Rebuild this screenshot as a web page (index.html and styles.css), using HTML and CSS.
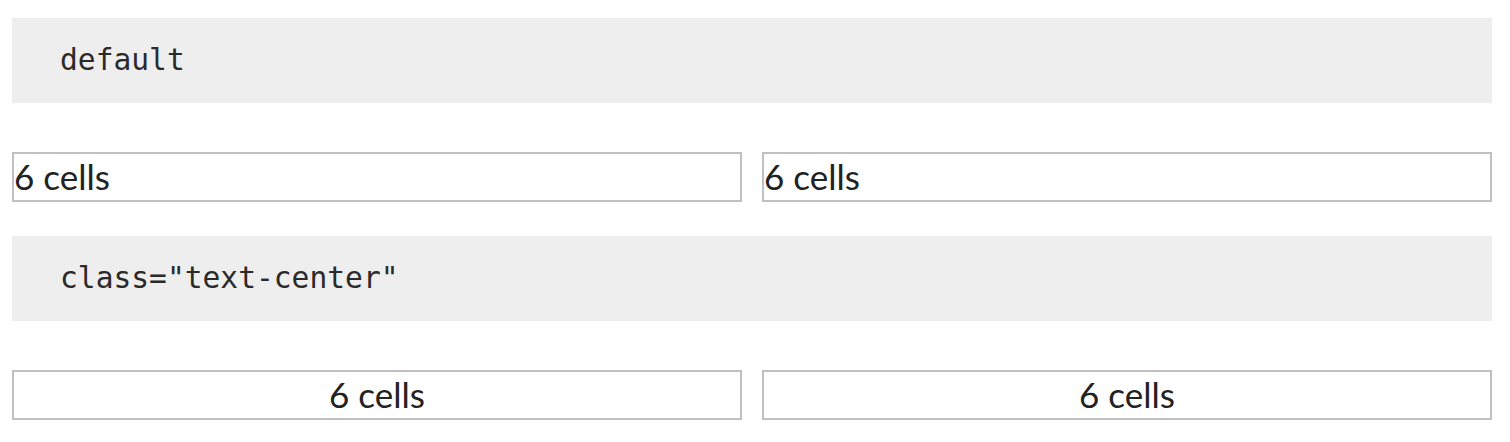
FILE: index.html
```html
<!DOCTYPE html>
<html>
<head>
<meta charset="utf-8">
<link rel="stylesheet" href="styles.css">
</head>
<body>
<div class="page">
  <div class="code"><code>default</code></div>
  <div class="row">
    <div class="cell">6 cells</div>
    <div class="cell">6 cells</div>
  </div>
  <div class="code"><code>class="text-center"</code></div>
  <div class="row text-center">
    <div class="cell">6 cells</div>
    <div class="cell">6 cells</div>
  </div>
</div>
</body>
</html>
```
FILE: styles.css
```css
html, body {
  margin: 0;
  padding: 0;
  background: #ffffff;
}
.page {
  width: 1480px;
  margin-left: 12px;
  padding-top: 18px;
}
.code {
  height: 85px;
  background: #eeeeee;
  padding: 0 48px;
  display: flex;
  align-items: center;
  box-sizing: border-box;
}
.code code {
  font-family: "DejaVu Sans Mono", monospace;
  font-size: 29.6px;
  color: #2a2a2a;
  line-height: 1;
}
.row {
  display: grid;
  grid-template-columns: 1fr 1fr;
  column-gap: 20px;
  margin: 49px 0 34px;
}
.cell {
  border: 2px solid #c0c0c0;
  font-family: Lato, "Liberation Sans", sans-serif;
  font-size: 35px;
  line-height: 44px;
  padding-bottom: 2px;
  color: #222222;
}
.text-center .cell {
  text-align: center;
}
```
